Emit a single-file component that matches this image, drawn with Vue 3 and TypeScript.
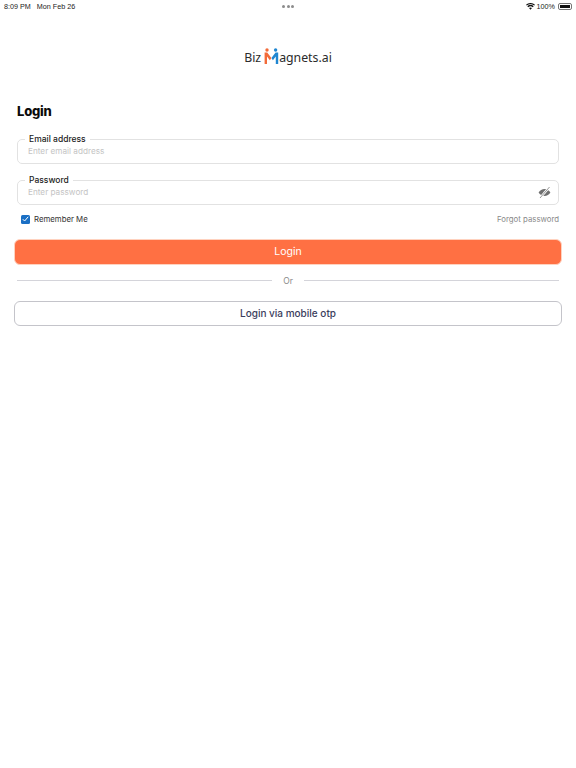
<script setup lang="ts">
const fields = [
  { label: 'Email address', placeholder: 'Enter email address', secret: false },
  { label: 'Password', placeholder: 'Enter password', secret: true }
]
</script>

<template>
  <div class="page">
    <div class="status">
      <div class="status__left">
        <span>8:09 PM</span>
        <span>Mon Feb 26</span>
      </div>
      <div class="status__dots"><i></i><i></i><i></i></div>
      <div class="status__right">
        <svg class="wifi" width="9" height="7" viewBox="0 0 11 8">
          <path d="M5.5 8 3.700 5.900a2.700 2.700 0 0 1 3.600 0ZM2.800 4.900 1.600 3.600a5.900 5.900 0 0 1 7.800 0L8.200 4.900a4.200 4.200 0 0 0-5.400 0ZM.9 2.800 0 1.800a8.300 8.300 0 0 1 11 0l-.9 1a7 7 0 0 0-9.200 0Z" fill="#111" />
        </svg>
        <span>100%</span>
        <span class="battery"><span class="battery__fill"></span></span>
      </div>
    </div>

    <div class="logo">
      <span>Biz</span>
      <svg class="logo__mark" width="15" height="16" viewBox="0 0 15 16">
        <circle cx="3" cy="2" r="1.700" fill="#f26b3a" />
        <circle cx="11.600" cy="2" r="1.700" fill="#1f86d1" />
        <path d="M.6 16V4.400h2.600L7.400 10l-1.500 2.300L3 8.400V16Z" fill="#f26b3a" />
        <path d="M14.200 16V4.400h-2.600L7.400 10l1.500 2.300 2.900-3.900V16Z" fill="#1f86d1" />
      </svg>
      <span>agnets.ai</span>
    </div>

    <h1 class="title">Login</h1>

    <form class="form" @submit.prevent>
      <fieldset v-for="field in fields" :key="field.label" class="field">
        <legend class="field__label">{{ field.label }}</legend>
        <span class="field__hint">{{ field.placeholder }}</span>
        <svg v-if="field.secret" class="field__eye" width="13" height="13" viewBox="0 0 13 13">
          <path d="M.6 6.500C2 4.300 4 3.100 6.500 3.100s4.500 1.200 5.900 3.400C11 8.700 9 9.900 6.500 9.900S2 8.700.6 6.500Z" fill="#6f6f6f" />
          <circle cx="6.500" cy="6.500" r="1.500" fill="#8d8d8d" />
          <path d="M2 12 11.500 1" stroke="#fff" stroke-width="2.200" />
          <path d="M2 12 11.500 1" stroke="#8a8a8a" stroke-width="0.900" />
        </svg>
      </fieldset>

      <div class="options">
        <label class="remember">
          <span class="remember__box">
            <svg width="7" height="6" viewBox="0 0 7 6">
              <path d="M.8 3.200 2.600 5 6.200.8" fill="none" stroke="#fff" stroke-width="1" />
            </svg>
          </span>
          Remember Me
        </label>
        <span class="forgot">Forgot password</span>
      </div>

      <button class="btn btn--primary" type="button">Login</button>

      <div class="divider">
        <span class="divider__line"></span>
        <span class="divider__text">Or</span>
        <span class="divider__line"></span>
      </div>

      <button class="btn btn--outline" type="button">Login via mobile otp</button>
    </form>
  </div>
</template>

<style>
html, body {
  background: #fff;
}
</style>

<style scoped>
.page {
  min-height: 768px;
  background: #fff;
  font-family: Inter, "Liberation Sans", sans-serif;
  color: #111;
}

.status {
  display: grid;
  grid-template-columns: 1fr auto 1fr;
  align-items: center;
  height: 12px;
  padding: 0 4px;
  font-family: "Liberation Sans", Arial, sans-serif;
  font-size: 7.200px;
  color: #222;
}

.status__left {
  display: flex;
  gap: 6px;
}

.status__dots {
  display: flex;
  gap: 1.500px;
}

.status__dots i {
  width: 3px;
  height: 3px;
  border-radius: 50%;
  background: #8c8c8c;
}

.status__right {
  display: flex;
  align-items: center;
  justify-content: flex-end;
  gap: 2px;
}

.battery {
  display: block;
  width: 14px;
  height: 7px;
  margin-left: 1px;
  padding: 1px;
  box-sizing: border-box;
  border: 1px solid #777;
  border-radius: 2px;
}

.battery__fill {
  display: block;
  height: 100%;
  background: #111;
}

.logo {
  display: flex;
  justify-content: center;
  align-items: flex-end;
  height: 18px;
  margin-top: 37px;
  font-family: "Noto Sans", "Open Sans", sans-serif;
  font-size: 12.300px;
  line-height: 18px;
  color: #2b2b2b;
}

.logo__mark {
  margin: 0 0 3px 3px;
}

.title {
  margin: 34px 0 0 17px;
  font-size: 13px;
  line-height: 20px;
  font-weight: 800;
  letter-spacing: -0.2px;
  color: #0b0b0b;
}

.form {
  display: flex;
  flex-direction: column;
  padding: 0 14px;
  margin-top: 12px;
}

.field {
  position: relative;
  height: 31px;
  margin: 0 3px 10px;
  padding: 0 0 0 7px;
  box-sizing: border-box;
  min-width: 0;
  border: 1px solid #e2e2e2;
  border-radius: 5px;
}

.field__label {
  padding: 0 4px;
  font-size: 8.500px;
  line-height: 12px;
  font-weight: 500;
  color: #222;
}

.field__hint {
  display: block;
  margin: 0 0 0 3px;
  font-size: 8.200px;
  line-height: 12px;
  color: #c4c4c4;
}

.field__eye {
  position: absolute;
  right: 7px;
  top: 0;
}

.options {
  display: flex;
  justify-content: space-between;
  align-items: center;
  margin: -3px 3px 0;
  height: 14px;
  font-size: 7.800px;
}

.remember {
  display: flex;
  align-items: center;
  gap: 4px;
  margin-left: 4px;
  color: #333;
}

.remember__box {
  display: flex;
  align-items: center;
  justify-content: center;
  width: 9px;
  height: 9px;
  border-radius: 1.500px;
  background: #1a6fc4;
}

.forgot {
  color: #8a8a8a;
}

.btn {
  display: block;
  width: 100%;
  height: 25.500px;
  padding: 0;
  box-sizing: border-box;
  border-radius: 6px;
  font-family: inherit;
}

.btn--primary {
  margin-top: 13px;
  border: 1px solid #ffd2bf;
  background: #ff7043;
  color: #fff;
  font-size: 10.500px;
  font-weight: 400;
}

.btn--outline {
  border: 1px solid #c4c4ca;
  background: #fff;
  color: #3a3d5c;
  font-size: 10px;
  font-weight: 500;
}

.divider {
  display: flex;
  align-items: center;
  gap: 11px;
  height: 12px;
  margin: 10px 3px 14px;
}

.divider__line {
  flex: 1;
  height: 1px;
  background: #d4d4da;
}

.divider__text {
  font-size: 8.500px;
  color: #8a8a8a;
}
</style>
